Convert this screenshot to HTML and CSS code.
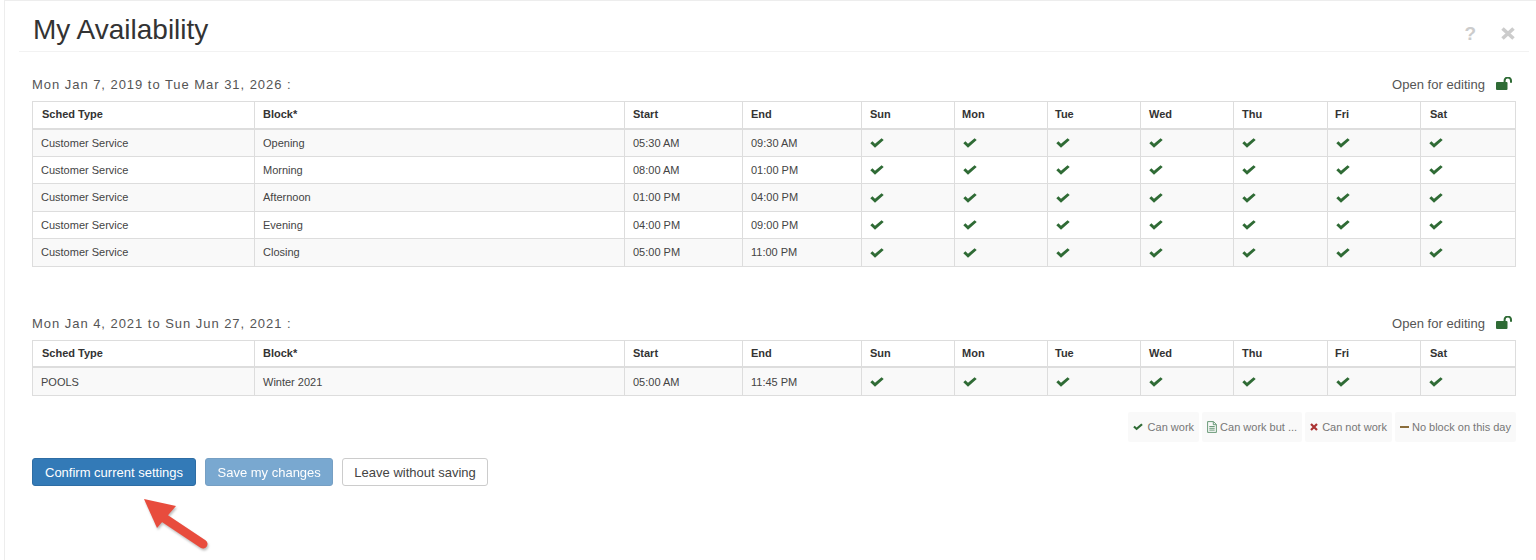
FILE: index.html
```html
<!DOCTYPE html>
<html lang="en">
<head>
<meta charset="utf-8">
<title>My Availability</title>
<link rel="stylesheet" href="styles.css">
</head>
<body>
<svg class="defs" width="0" height="0" aria-hidden="true">
  <symbol id="check" viewBox="0 0 14 10"><path d="M0.3 5.2 L2.4 3.3 L5 5.7 L11.6 0.2 L13.7 2.1 L5 9.7 Z"/></symbol>
  <symbol id="lock" viewBox="0 0 17 13"><rect x="0" y="5" width="11.5" height="8" rx="1"/><path d="M8.6 5.5 V3.8 A3.2 3.2 0 0 1 15 3.8 V5.8" fill="none" stroke="currentColor" stroke-width="2"/></symbol>
</svg>
<div class="page">
  <header class="head">
    <h1 class="title">My Availability</h1>
    <div class="head-tools">
      <span class="help">?</span>
      <svg class="close" viewBox="0 0 14 13" aria-hidden="true"><path d="M1.5 1.5 L12.5 11.5 M12.5 1.5 L1.5 11.5"/></svg>
    </div>
  </header>
  <main class="content">
    <section class="block">
      <div class="block-head">
        <span class="range">Mon Jan 7, 2019 to Tue Mar 31, 2026 :</span>
        <span class="status">Open for editing <svg class="lock"><use href="#lock"/></svg></span>
      </div>
      <table class="grid">
        <thead>
          <tr><th>Sched Type</th><th>Block*</th><th>Start</th><th>End</th><th>Sun</th><th>Mon</th><th>Tue</th><th>Wed</th><th>Thu</th><th>Fri</th><th>Sat</th></tr>
        </thead>
        <tbody>
          <tr><td>Customer Service</td><td>Opening</td><td>05:30 AM</td><td>09:30 AM</td><td><svg class="ck"><use href="#check"/></svg></td><td><svg class="ck"><use href="#check"/></svg></td><td><svg class="ck"><use href="#check"/></svg></td><td><svg class="ck"><use href="#check"/></svg></td><td><svg class="ck"><use href="#check"/></svg></td><td><svg class="ck"><use href="#check"/></svg></td><td><svg class="ck"><use href="#check"/></svg></td></tr>
          <tr><td>Customer Service</td><td>Morning</td><td>08:00 AM</td><td>01:00 PM</td><td><svg class="ck"><use href="#check"/></svg></td><td><svg class="ck"><use href="#check"/></svg></td><td><svg class="ck"><use href="#check"/></svg></td><td><svg class="ck"><use href="#check"/></svg></td><td><svg class="ck"><use href="#check"/></svg></td><td><svg class="ck"><use href="#check"/></svg></td><td><svg class="ck"><use href="#check"/></svg></td></tr>
          <tr><td>Customer Service</td><td>Afternoon</td><td>01:00 PM</td><td>04:00 PM</td><td><svg class="ck"><use href="#check"/></svg></td><td><svg class="ck"><use href="#check"/></svg></td><td><svg class="ck"><use href="#check"/></svg></td><td><svg class="ck"><use href="#check"/></svg></td><td><svg class="ck"><use href="#check"/></svg></td><td><svg class="ck"><use href="#check"/></svg></td><td><svg class="ck"><use href="#check"/></svg></td></tr>
          <tr><td>Customer Service</td><td>Evening</td><td>04:00 PM</td><td>09:00 PM</td><td><svg class="ck"><use href="#check"/></svg></td><td><svg class="ck"><use href="#check"/></svg></td><td><svg class="ck"><use href="#check"/></svg></td><td><svg class="ck"><use href="#check"/></svg></td><td><svg class="ck"><use href="#check"/></svg></td><td><svg class="ck"><use href="#check"/></svg></td><td><svg class="ck"><use href="#check"/></svg></td></tr>
          <tr><td>Customer Service</td><td>Closing</td><td>05:00 PM</td><td>11:00 PM</td><td><svg class="ck"><use href="#check"/></svg></td><td><svg class="ck"><use href="#check"/></svg></td><td><svg class="ck"><use href="#check"/></svg></td><td><svg class="ck"><use href="#check"/></svg></td><td><svg class="ck"><use href="#check"/></svg></td><td><svg class="ck"><use href="#check"/></svg></td><td><svg class="ck"><use href="#check"/></svg></td></tr>
        </tbody>
      </table>
    </section>
    <section class="block block-second">
      <div class="block-head">
        <span class="range">Mon Jan 4, 2021 to Sun Jun 27, 2021 :</span>
        <span class="status">Open for editing <svg class="lock"><use href="#lock"/></svg></span>
      </div>
      <table class="grid">
        <thead>
          <tr><th>Sched Type</th><th>Block*</th><th>Start</th><th>End</th><th>Sun</th><th>Mon</th><th>Tue</th><th>Wed</th><th>Thu</th><th>Fri</th><th>Sat</th></tr>
        </thead>
        <tbody>
          <tr class="row-tall"><td>POOLS</td><td>Winter 2021</td><td>05:00 AM</td><td>11:45 PM</td><td><svg class="ck"><use href="#check"/></svg></td><td><svg class="ck"><use href="#check"/></svg></td><td><svg class="ck"><use href="#check"/></svg></td><td><svg class="ck"><use href="#check"/></svg></td><td><svg class="ck"><use href="#check"/></svg></td><td><svg class="ck"><use href="#check"/></svg></td><td><svg class="ck"><use href="#check"/></svg></td></tr>
        </tbody>
      </table>
    </section>
    <div class="legend">
      <span class="chip chip-work"><svg class="ck ck-small"><use href="#check"/></svg>Can work</span>
      <span class="chip chip-but"><svg class="doc" viewBox="0 0 10 12" aria-hidden="true"><path d="M0.6 0.6 H6.5 L9.4 3.5 V11.4 H0.6 Z M6.3 0.8 V3.7 H9.2 M2.3 5.5 H7.7 M2.3 7.3 H7.7 M2.3 9.1 H7.7"/></svg>Can work but ...</span>
      <span class="chip chip-not"><svg class="cross" viewBox="0 0 8 8" aria-hidden="true"><path d="M1 1 L7 7 M7 1 L1 7"/></svg>Can not work</span>
      <span class="chip chip-none"><i class="dash"></i>No block on this day</span>
    </div>
    <div class="actions">
      <button class="btn btn-primary" type="button">Confirm current settings</button>
      <button class="btn btn-primary btn-disabled" type="button">Save my changes</button>
      <button class="btn btn-plain" type="button">Leave without saving</button>
    </div>
  </main>
  <svg class="arrow" viewBox="0 0 70 60" aria-hidden="true">
    <path class="arrow-shaft" d="M22 18 L64 46"/>
    <path class="arrow-head" d="M5 1 L37 8 L18 30 Z"/>
  </svg>
</div>
</body>
</html>
```

FILE: styles.css
```css
* { box-sizing: border-box; }
html, body { margin: 0; padding: 0; height: 100%; background: #fff; }
body { font-family: "Liberation Sans", Arial, sans-serif; color: #333; overflow: hidden; }
.defs { position: absolute; }

.page {
  position: relative;
  height: 560px;
  margin-left: 4px;
  border-left: 1px solid #ededed;
  border-top: 1px solid #ededed;
}

.head {
  display: flex;
  align-items: center;
  justify-content: space-between;
  height: 51px;
  margin: 0 7px 0 14px;
  padding: 8px 0 0 14px;
  border-bottom: 1px solid #f2f2f2;
}
.title { margin: 0; font-size: 28px; font-weight: 400; color: #333; }
.head-tools { display: flex; align-items: center; gap: 25px; padding: 6px 14px 0 0; }
.help { font-size: 19px; font-weight: 700; color: #ccc; line-height: 1; }
.close { width: 14px; height: 13px; }
.close path { stroke: #ccc; stroke-width: 3.6; fill: none; }

.content { padding: 0 20px 0 27px; }
.block { padding-top: 22px; }
.block-second { padding-top: 47px; }
.block-head {
  display: flex;
  justify-content: space-between;
  align-items: center;
  height: 20px;
  margin-bottom: 7px;
}
.block-second .block-head { margin-bottom: 6px; }
.range { font-size: 13px; letter-spacing: 0.96px; color: #555; }
.status { display: flex; align-items: center; gap: 11px; font-size: 13px; letter-spacing: 0.03px; color: #555; padding-right: 3px; }
.lock { width: 17px; height: 13px; color: #2f6b35; fill: #2f6b35; margin-top: -2px; }

.grid {
  width: 1483px;
  table-layout: fixed;
  border-collapse: collapse;
  font-size: 11px;
  color: #444;
}
.grid th, .grid td {
  border: 1px solid #ddd;
  padding: 0 8px;
  text-align: left;
  vertical-align: middle;
}
.grid th { height: 27px; font-weight: 700; color: #333; border-bottom-width: 2px; padding-bottom: 1px; }
.grid td { height: 27.5px; }
.grid .row-tall td { height: 28.5px; }
.grid tbody tr:nth-child(odd) td { background: #f9f9f9; }
.grid th:nth-child(1) { width: 222px; padding-left: 9px; }
.grid th:nth-child(2) { width: 370px; }
.grid th:nth-child(3) { width: 118px; }
.grid th:nth-child(4) { width: 119px; }
.grid th:nth-child(5) { width: 93px; }
.grid th:nth-child(6) { width: 93px; padding-left: 7px; }
.grid th:nth-child(7) { width: 93px; padding-left: 7px; }
.grid th:nth-child(8) { width: 93px; }
.grid th:nth-child(9) { width: 94px; }
.grid th:nth-child(10) { width: 93px; padding-left: 7px; }
.grid th:nth-child(11) { width: 95px; padding-left: 9px; }

.ck { display: block; width: 14px; height: 10px; fill: #2f6b35; margin-top: 1px; }
.ck-small { display: inline-block; width: 10px; height: 8px; margin: 0 4px 0 0; }

.legend {
  display: flex;
  justify-content: flex-end;
  gap: 3px;
  margin-top: 16px;
  font-size: 11px;
  color: #777;
}
.chip {
  display: flex;
  align-items: center;
  height: 30px;
  padding: 0 5px 1px;
  background: #f9f9f9;
  border-radius: 2px;
  white-space: nowrap;
}
.chip-work .ck-small { margin-right: 5px; }
.doc { width: 10px; height: 12px; margin-right: 3px; }
.doc path { fill: none; stroke: #5a8f6a; stroke-width: 0.9; }
.cross { width: 8px; height: 8px; margin-right: 4px; }
.cross path { stroke: #a33; stroke-width: 2.2; fill: none; }
.dash { display: block; width: 9px; height: 2px; margin-right: 3px; background: #8a6d3b; }

.actions { display: flex; gap: 9px; margin-top: 16px; }
.btn {
  height: 28px;
  padding: 0 12px;
  font: 13px "Liberation Sans", Arial, sans-serif;
  border-radius: 3px;
  border: 1px solid;
}
.btn-primary { background: #337ab7; border-color: #2e6da4; color: #fff; }
.btn-disabled { opacity: 0.65; padding: 0 11.5px; }
.btn-plain { background: #fff; border-color: #ccc; color: #444; padding: 0 11px; }

.arrow {
  position: absolute;
  left: 134px;
  top: 497px;
  width: 70px;
  height: 60px;
  overflow: visible;
  filter: drop-shadow(1px 2px 1px rgba(0, 0, 0, 0.25));
}
.arrow-shaft { stroke: #e84c3d; stroke-width: 9; stroke-linecap: round; fill: none; }
.arrow-head { fill: #e84c3d; }
```
